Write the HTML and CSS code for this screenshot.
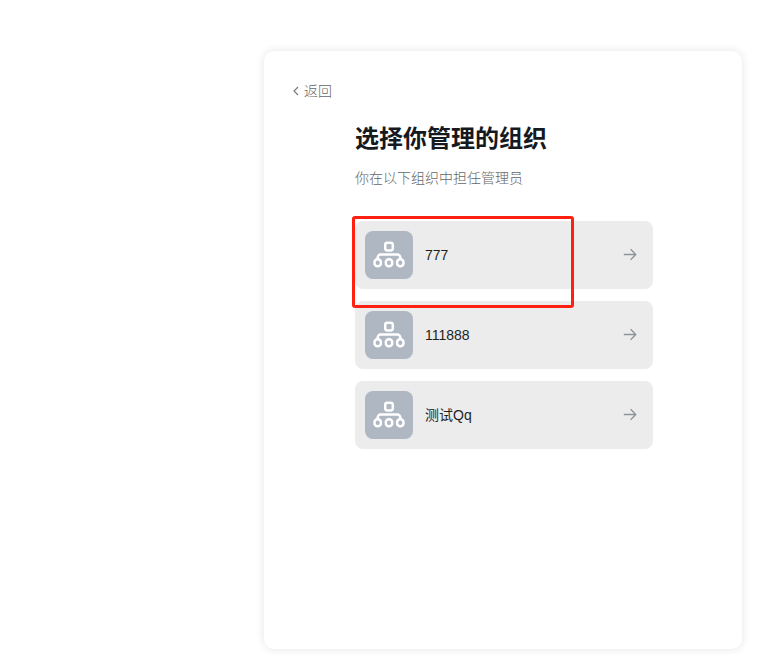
FILE: index.html
```html
<!DOCTYPE html>
<html lang="zh-CN">
<head>
<meta charset="utf-8">
<meta name="viewport" content="width=device-width, initial-scale=1">
<title>选择你管理的组织</title>
<link rel="stylesheet" href="styles.css">
</head>
<body>
<svg class="sprite" aria-hidden="true">
  <symbol id="org" viewBox="0 0 48 48">
    <rect x="20.2" y="11.8" width="7.6" height="7.6" rx="2.2"/>
    <path d="M12.7 28v-1.5a3 3 0 0 1 3-3h16.6a3 3 0 0 1 3 3V28"/>
    <rect x="9.5" y="28.3" width="6.4" height="7" rx="3"/>
    <rect x="20.8" y="28.3" width="6.4" height="7" rx="3"/>
    <rect x="32.1" y="28.3" width="6.4" height="7" rx="3"/>
  </symbol>
  <symbol id="arrow" viewBox="0 0 14 14">
    <path d="M.8 6.5h12M7.6 1.3l5.2 5.2-5.2 5.2"/>
  </symbol>
</svg>
<main class="page">
  <section class="card">
    <a class="back" href="#">
      <svg class="chevron" viewBox="0 0 8 10" aria-hidden="true"><path d="M6 1 2 5l4 4"/></svg>
      <span>返回</span>
    </a>
    <div class="content">
      <h1 class="title">选择你管理的组织</h1>
      <p class="subtitle">你在以下组织中担任管理员</p>
      <ul class="orgs">
        <li class="item marked">
          <button class="org" type="button">
            <svg class="avatar" aria-hidden="true"><use href="#org"/></svg>
            <span class="name">777</span>
            <svg class="arrow" aria-hidden="true"><use href="#arrow"/></svg>
          </button>
        </li>
        <li class="item">
          <button class="org" type="button">
            <svg class="avatar" aria-hidden="true"><use href="#org"/></svg>
            <span class="name">111888</span>
            <svg class="arrow" aria-hidden="true"><use href="#arrow"/></svg>
          </button>
        </li>
        <li class="item">
          <button class="org" type="button">
            <svg class="avatar" aria-hidden="true"><use href="#org"/></svg>
            <span class="name">测试Qq</span>
            <svg class="arrow" aria-hidden="true"><use href="#arrow"/></svg>
          </button>
        </li>
      </ul>
    </div>
  </section>
</main>
</body>
</html>
```
FILE: styles.css
```css
* {
  box-sizing: border-box;
}

body {
  margin: 0;
  background: #fff;
  color: #1f2329;
  font-family: "Liberation Sans", "Noto Sans CJK SC", sans-serif;
  font-size: 14px;
  line-height: 20px;
}

.sprite {
  position: absolute;
  width: 0;
  height: 0;
}

.page {
  display: flex;
  justify-content: flex-end;
  min-height: 100vh;
  padding: 51px 40px 6px;
}

.card {
  width: 100%;
  max-width: 478px;
  padding: 30px 28px;
  border-radius: 10px;
  background: #fff;
  box-shadow: 0 0 10px rgba(0, 0, 0, 0.11);
}

.back {
  display: inline-flex;
  align-items: center;
  gap: 4px;
  color: #666;
  font-weight: 300;
  text-decoration: none;
}

.chevron {
  width: 8px;
  height: 10px;
  fill: none;
  stroke: #757575;
  stroke-width: 1.1;
}

.content {
  margin: 20px 61px 0 63px;
}

.title {
  margin: 0;
  color: #16191d;
  font-size: 24px;
  font-weight: 700;
  line-height: 36px;
}

.subtitle {
  margin: 11px 0 0;
  color: #666;
  font-weight: 300;
}

.orgs {
  display: grid;
  gap: 12px;
  margin: 33px 0 0;
  padding: 0;
  list-style: none;
}

.item {
  position: relative;
}

.org {
  display: flex;
  align-items: center;
  gap: 12px;
  width: 100%;
  padding: 10px 16px 10px 10px;
  border: 0;
  border-radius: 8px;
  background: #ececec;
  color: #1f1f1f;
  font: inherit;
  text-align: left;
  cursor: pointer;
}

.avatar {
  flex: none;
  width: 48px;
  height: 48px;
  border-radius: 8px;
  background: #afb7c3;
  fill: none;
  stroke: #fff;
  stroke-width: 2.5;
}

.name {
  flex: 1;
}

.arrow {
  flex: none;
  width: 14px;
  height: 14px;
  fill: none;
  stroke: #8d939d;
  stroke-width: 1.3;
}

.marked::after {
  content: "";
  position: absolute;
  z-index: 1;
  top: -5px;
  right: 79px;
  bottom: -19px;
  left: -3px;
  border: 3px solid #ff2012;
  border-radius: 3px;
  pointer-events: none;
}
```
